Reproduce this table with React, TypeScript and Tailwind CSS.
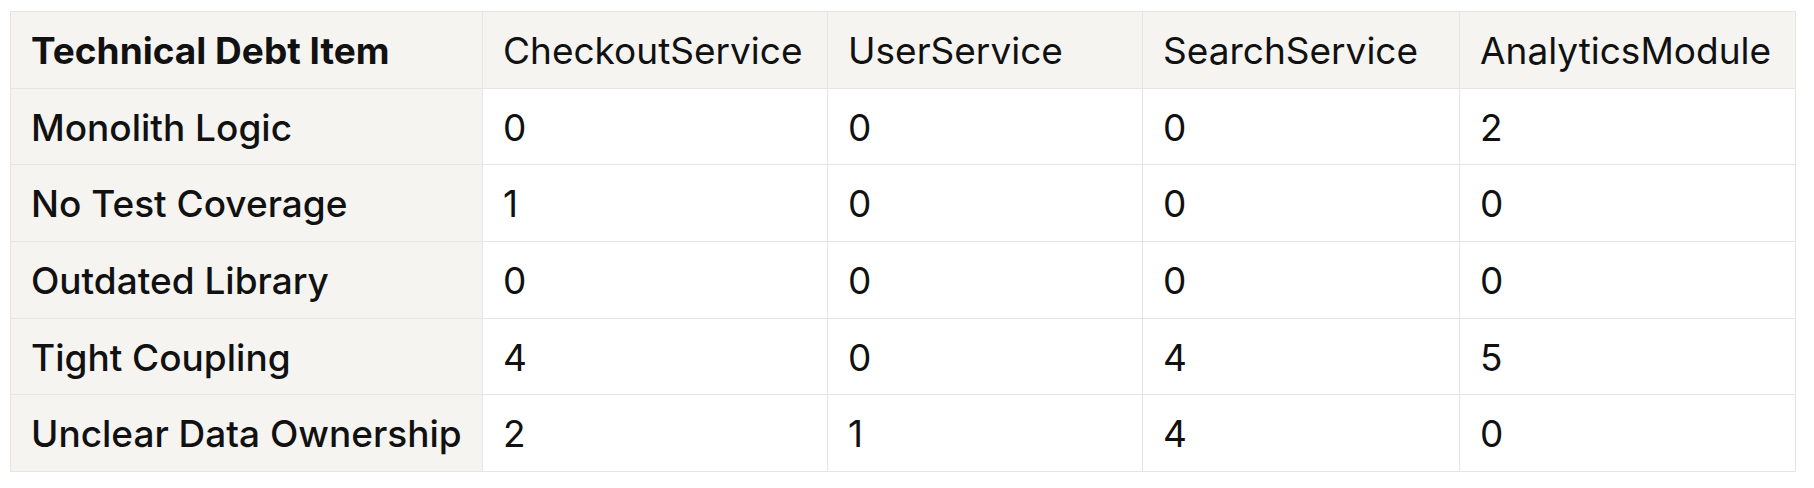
import React from 'react'

const columns = ['CheckoutService', 'UserService', 'SearchService', 'AnalyticsModule']

const rows: { item: string; values: number[] }[] = [
  { item: 'Monolith Logic', values: [0, 0, 0, 2] },
  { item: 'No Test Coverage', values: [1, 0, 0, 0] },
  { item: 'Outdated Library', values: [0, 0, 0, 0] },
  { item: 'Tight Coupling', values: [4, 0, 4, 5] },
  { item: 'Unclear Data Ownership', values: [2, 1, 4, 0] },
]

const widths = ['w-[472px]', 'w-[345px]', 'w-[315px]', 'w-[317px]', 'w-[336px]']

const App = () => {
  return (
    <div
      className="min-h-screen bg-white pl-[10px] pt-[11px] text-[#111111]"
      style={{ fontFamily: 'Inter, "Noto Sans", sans-serif' }}
    >
      <table className="table-fixed border-collapse whitespace-nowrap text-[37px] leading-[43.67px]">
        <thead>
          <tr className="bg-[#f5f4f1]">
            <th
              className={`${widths[0]} border border-[#e6e5e3] px-5 pt-[17px] pb-[15px] text-left font-bold`}
            >
              Technical Debt Item
            </th>
            {columns.map((col, i) => (
              <th
                key={col}
                className={`${widths[i + 1]} border border-[#e6e5e3] px-5 pt-[17px] pb-[15px] text-left font-normal`}
              >
                {col}
              </th>
            ))}
          </tr>
        </thead>
        <tbody>
          {rows.map((row) => (
            <tr key={row.item}>
              <td className="border border-[#e6e5e3] bg-[#f5f4f1] px-5 pt-[17px] pb-[15px] font-medium">
                {row.item}
              </td>
              {row.values.map((v, i) => (
                <td key={i} className="border border-[#e6e5e3] bg-white px-5 pt-[17px] pb-[15px]">
                  {v}
                </td>
              ))}
            </tr>
          ))}
        </tbody>
      </table>
    </div>
  )
}

export default App
